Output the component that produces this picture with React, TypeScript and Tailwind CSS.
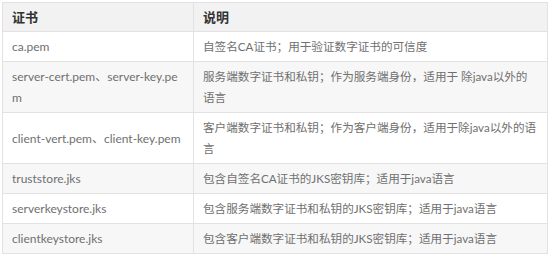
import React from 'react';

const rows: [string, string][] = [
  ['ca.pem', '自签名CA证书；用于验证数字证书的可信度'],
  ['server-cert.pem、server-key.pem', '服务端数字证书和私钥；作为服务端身份，适用于 除java以外的语言'],
  ['client-vert.pem、client-key.pem', '客户端数字证书和私钥；作为客户端身份，适用于除java以外的语言'],
  ['truststore.jks', '包含自签名CA证书的JKS密钥库；适用于java语言'],
  ['serverkeystore.jks', '包含服务端数字证书和私钥的JKS密钥库；适用于java语言'],
  ['clientkeystore.jks', '包含客户端数字证书和私钥的JKS密钥库；适用于java语言'],
];

const cell =
  'border border-[#e2e2e2] px-[9px] py-[4px] align-middle text-[11.6px] leading-[21px] text-[#707070] break-all';

export default function App() {
  return (
    <div
      className="w-[550px] h-[255px] bg-white pl-[2px] pt-[2px]"
      style={{ fontFamily: 'Lato, "Noto Sans CJK SC", sans-serif' }}
    >
      <table className="w-[546px] table-fixed border-collapse border border-[#e2e2e2]">
        <colgroup>
          <col className="w-[191px]" />
          <col />
        </colgroup>
        <thead>
          <tr className="bg-[#f2f2f2]">
            <th className="border border-[#e2e2e2] px-[9px] py-[4px] text-left text-[13px] leading-[20px] font-bold text-[#333]">
              证书
            </th>
            <th className="border border-[#e2e2e2] px-[9px] py-[4px] text-left text-[13px] leading-[20px] font-bold text-[#333]">
              说明
            </th>
          </tr>
        </thead>
        <tbody>
          {rows.map(([name, desc], i) => (
            <tr key={name} className={i % 2 === 0 ? 'bg-white' : 'bg-[#f7f7f7]'}>
              <td className={`${cell} text-[12px]`}>{name}</td>
              <td className={cell}>{desc}</td>
            </tr>
          ))}
        </tbody>
      </table>
    </div>
  );
}
